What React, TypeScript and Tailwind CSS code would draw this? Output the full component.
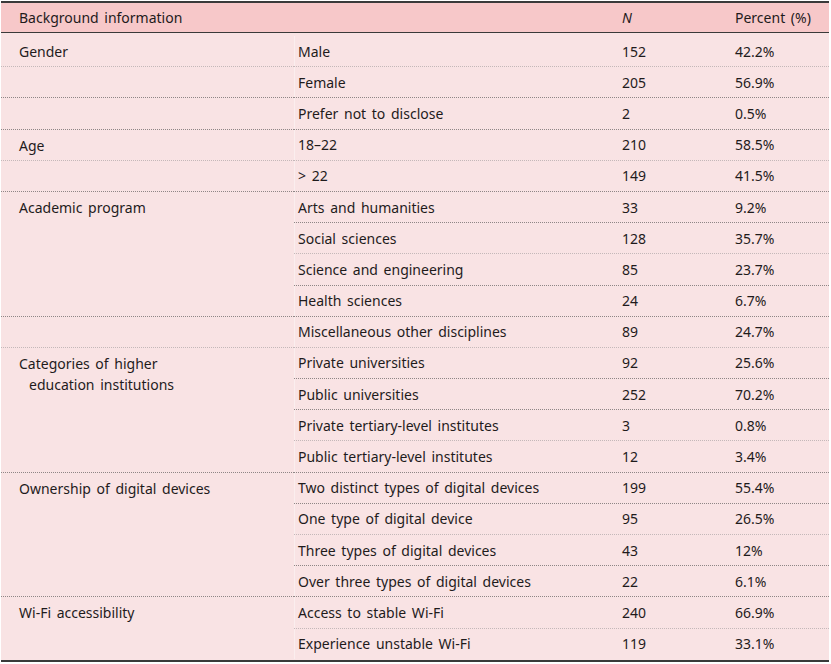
import React from "react";

type Line = "none" | "light" | "dark";
type Row = { c1?: string; c1b?: string; c2: string; n: string; p: string; l1: Line; l2: Line };

const rows: Row[] = [
  { c1: "Gender", c2: "Male", n: "152", p: "42.2%", l1: "light", l2: "light" },
  { c2: "Female", n: "205", p: "56.9%", l1: "dark", l2: "dark" },
  { c2: "Prefer not to disclose", n: "2", p: "0.5%", l1: "dark", l2: "dark" },
  { c1: "Age", c2: "18–22", n: "210", p: "58.5%", l1: "light", l2: "light" },
  { c2: "> 22", n: "149", p: "41.5%", l1: "dark", l2: "dark" },
  { c1: "Academic program", c2: "Arts and humanities", n: "33", p: "9.2%", l1: "none", l2: "dark" },
  { c2: "Social sciences", n: "128", p: "35.7%", l1: "none", l2: "light" },
  { c2: "Science and engineering", n: "85", p: "23.7%", l1: "none", l2: "dark" },
  { c2: "Health sciences", n: "24", p: "6.7%", l1: "dark", l2: "dark" },
  { c2: "Miscellaneous other disciplines", n: "89", p: "24.7%", l1: "light", l2: "light" },
  { c1: "Categories of higher", c1b: "education institutions", c2: "Private universities", n: "92", p: "25.6%", l1: "none", l2: "dark" },
  { c2: "Public universities", n: "252", p: "70.2%", l1: "none", l2: "dark" },
  { c2: "Private tertiary-level institutes", n: "3", p: "0.8%", l1: "none", l2: "light" },
  { c2: "Public tertiary-level institutes", n: "12", p: "3.4%", l1: "dark", l2: "dark" },
  { c1: "Ownership of digital devices", c2: "Two distinct types of digital devices", n: "199", p: "55.4%", l1: "none", l2: "dark" },
  { c2: "One type of digital device", n: "95", p: "26.5%", l1: "none", l2: "light" },
  { c2: "Three types of digital devices", n: "43", p: "12%", l1: "none", l2: "dark" },
  { c2: "Over three types of digital devices", n: "22", p: "6.1%", l1: "dark", l2: "dark" },
  { c1: "Wi-Fi accessibility", c2: "Access to stable Wi-Fi", n: "240", p: "66.9%", l1: "none", l2: "light" },
  { c2: "Experience unstable Wi-Fi", n: "119", p: "33.1%", l1: "none", l2: "none" },
];

function lineCls(l: Line) {
  if (l === "dark") return "border-b border-dotted border-[#8f8686]";
  if (l === "light") return "border-b border-dotted border-[#c4b8b9]";
  return "border-b border-transparent";
}

export default function App() {
  return (
    <div
      className="bg-white w-[831px] h-[664px] pt-[1px] pl-[1px] text-[#1f1b1c] text-[14px] [word-spacing:2px]"
      style={{ fontFamily: '"Noto Sans", "Open Sans", sans-serif' }}
    >
      <div className="w-[828px] border-t-2 border-b-2 border-[#3a3a3a] bg-[#f9e3e4]">
        <div className="flex h-[30px] items-center bg-[#f7c8c9] border-b border-[#3a3a3a]">
          <div className="w-[617px] pl-[18px]">Background information</div>
          <div className="w-[113px] pl-[4px] italic">N</div>
          <div className="flex-1 pl-[4px]">Percent (%)</div>
        </div>
        <div className="h-[3px]" />
        {rows.map((r, i) => (
          <div key={i} className="flex h-[31.2px]">
            <div className={`w-[293px] pl-[18px] ${lineCls(r.l1)}`}>
              {r.c1 && (
                <div className="pt-[5px] leading-[21px] whitespace-nowrap">
                  <div>{r.c1}</div>
                  {r.c1b && <div className="pl-[10px]">{r.c1b}</div>}
                </div>
              )}
            </div>
            <div className={`flex flex-1 items-center ${lineCls(r.l2)}`}>
              <div className="w-[324px] pl-[3px] border-l border-[#fbeeee] h-full flex items-center whitespace-nowrap">{r.c2}</div>
              <div className="w-[113px] pl-[4px]">{r.n}</div>
              <div className="flex-1 pl-[4px]">{r.p}</div>
            </div>
          </div>
        ))}
      </div>
    </div>
  );
}
